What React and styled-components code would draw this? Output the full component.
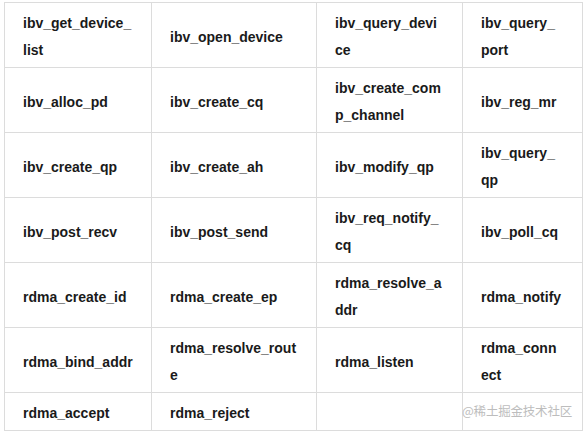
import React from "react";
import styled, { createGlobalStyle } from "styled-components";

const Global = createGlobalStyle`
  html, body { margin: 0; padding: 0; background: #fff; }
  body { font-family: "Liberation Sans", Arial, sans-serif; }
`;

const Page = styled.div`
  position: relative;
  width: 585px;
  height: 431px;
  padding: 2px 0 0 4px;
  box-sizing: border-box;
  overflow: hidden;
`;

const Table = styled.table`
  border-collapse: collapse;
  table-layout: fixed;
  width: 578px;
`;

const Cell = styled.td`
  border: 1px solid #dcdcdc;
  padding: 7px ${(p) => (p.$last ? "19.8px" : "18px")} 3px 18px;
  font-size: 14px;
  font-weight: 700;
  line-height: 27px;
  color: #1a1a1a;
  word-break: break-all;
  vertical-align: middle;
  height: ${(p) => (p.$short ? "27px" : "54px")};
  box-sizing: content-box;
`;

const Watermark = styled.div`
  position: absolute;
  right: 13px;
  bottom: 13px;
  font-family: "Noto Sans CJK SC", "Liberation Sans", sans-serif;
  font-size: 12.5px;
  line-height: 14px;
  color: #bdbdbd;
  letter-spacing: -0.2px;
`;

const rows = [
  ["ibv_get_device_list", "ibv_open_device", "ibv_query_device", "ibv_query_port"],
  ["ibv_alloc_pd", "ibv_create_cq", "ibv_create_comp_channel", "ibv_reg_mr"],
  ["ibv_create_qp", "ibv_create_ah", "ibv_modify_qp", "ibv_query_qp"],
  ["ibv_post_recv", "ibv_post_send", "ibv_req_notify_cq", "ibv_poll_cq"],
  ["rdma_create_id", "rdma_create_ep", "rdma_resolve_addr", "rdma_notify"],
  ["rdma_bind_addr", "rdma_resolve_route", "rdma_listen", "rdma_connect"],
  ["rdma_accept", "rdma_reject", "", ""],
];

const widths = [147, 165, 146, 120];

export default function App() {
  return (
    <>
      <Global />
      <Page>
        <Table>
          <colgroup>
            {widths.map((w, i) => (
              <col key={i} style={{ width: w }} />
            ))}
          </colgroup>
          <tbody>
            {rows.map((r, i) => (
              <tr key={i}>
                {r.map((c, j) => (
                  <Cell
                    key={j}
                    $short={i === rows.length - 1}
                    $last={j === r.length - 1}
                  >
                    {c}
                  </Cell>
                ))}
              </tr>
            ))}
          </tbody>
        </Table>
        <Watermark>@稀土掘金技术社区</Watermark>
      </Page>
    </>
  );
}
